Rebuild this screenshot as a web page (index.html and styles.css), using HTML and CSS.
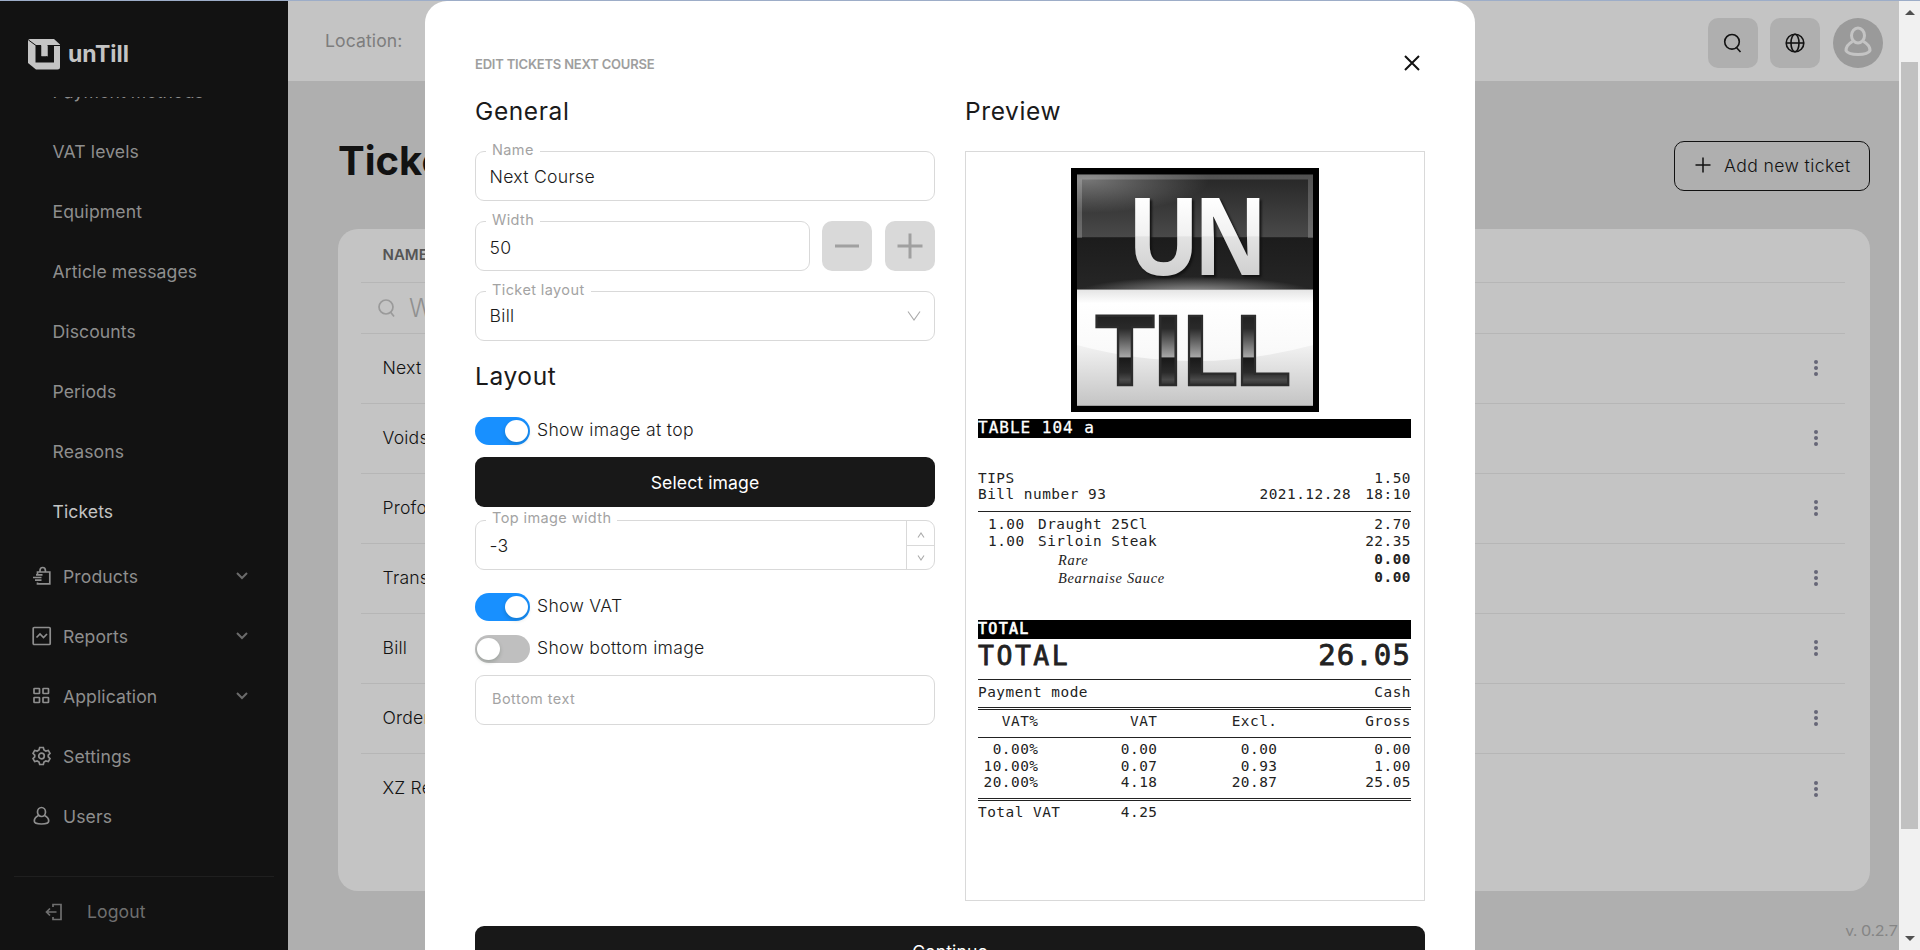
FILE: index.html
```html
<!DOCTYPE html>
<html lang="en">
<head>
<meta charset="utf-8">
<title>unTill – Tickets</title>
<link rel="stylesheet" href="styles.css">
</head>
<body>
<div class="app">
  <aside class="sidebar">
    <div class="brand">
      <svg width="33" height="31" viewBox="0 0 33 31"><path d="M6 0H26L32 5.500V28Q32 30.500 29.500 30.500H8L0 24V2Q0 0 2 0Z" fill="#c4c4c4"/><path d="M0.500 1L8 6.500H13V18H19V6.500H32" fill="none" stroke="#121212" stroke-width="1"/><path d="M7.500 6.500H13V17.500H20V6.500H26V23.500H7.500Z" fill="#121212"/><path d="M13.500 0H19.500V17H13.500Z" fill="#c4c4c4"/></svg>
      <span>unTill</span>
    </div>
    <nav class="menu">
      <div class="submenu">
        <a class="sub">Payment methods</a><a class="sub">VAT levels</a><a class="sub">Equipment</a><a class="sub">Article messages</a><a class="sub">Discounts</a><a class="sub">Periods</a><a class="sub">Reasons</a><a class="sub active">Tickets</a>
      </div>
      <a class="item"><svg class="ico" viewBox="0 0 20 20"><path d="M5.500 8.500V6H17.800V17.800H5.500V16.500M8 6V4.500Q8 1.500 10.700 1.500Q13.400 1.500 13.400 4.500V6M4 8.800H10.500M1 11.500H9.500M3 14.200H9.500"/></svg><span>Products</span><svg class="chev" viewBox="0 0 14 10"><path d="M2 2L7 7L12 2"/></svg></a>
      <a class="item"><svg class="ico" viewBox="0 0 20 20"><rect x="1.200" y="1.500" width="17" height="17" rx="1"/><path d="M4.500 11.500L8 8L11.500 11.500L15 8"/></svg><span>Reports</span><svg class="chev" viewBox="0 0 14 10"><path d="M2 2L7 7L12 2"/></svg></a>
      <a class="item"><svg class="ico" viewBox="0 0 20 20"><rect x="2" y="2.500" width="5.500" height="5" rx=".5"/><rect x="11" y="2.500" width="5.500" height="5" rx=".5"/><rect x="2" y="11.500" width="5.500" height="5" rx=".5"/><rect x="11" y="11.500" width="5.500" height="5" rx=".5"/></svg><span>Application</span><svg class="chev" viewBox="0 0 14 10"><path d="M2 2L7 7L12 2"/></svg></a>
      <a class="item"><svg class="ico" viewBox="0 0 20 20"><path d="M7.700 1.500H11.300L12 4L13.800 5L16.300 4.400L18 7.400L16.300 9.200V10.800L18 12.600L16.300 15.600L13.800 15L12 16L11.300 18.500H7.700L7 16L5.200 15L2.700 15.600L1 12.600L2.700 10.800V9.200L1 7.400L2.700 4.400L5.200 5L7 4Z"/><circle cx="9.500" cy="10" r="2.800"/></svg><span>Settings</span></a>
      <a class="item"><svg class="ico" viewBox="0 0 20 20"><ellipse cx="9.500" cy="6" rx="4" ry="4.500"/><path d="M6.500 9.500Q2.300 11.500 2.300 15Q2.300 18 9.500 18Q16.700 18 16.700 15Q16.700 11.500 12.500 9.500"/></svg><span>Users</span></a>
    </nav>
    <div class="logout"><svg class="ico" viewBox="0 0 20 20"><path d="M8 5V2.500H16V17.500H8V15M1.500 10H11.500M5 6.500L1.500 10L5 13.500"/></svg><span>Logout</span></div>
  </aside>
  <main class="main">
    <header class="topbar">
      <span class="location">Location:</span>
      <div class="tools">
        <div class="tool"><svg width="20" height="20" viewBox="0 0 20 20"><circle cx="9" cy="8.800" r="7.300"/><path d="M13 14L17.500 19"/></svg></div>
        <div class="tool"><svg width="20" height="20" viewBox="0 0 20 20"><circle cx="10" cy="10" r="8.800"/><ellipse cx="10" cy="10" rx="4" ry="8.800"/><path d="M1.200 10H18.800"/></svg></div>
        <div class="avatar"><svg width="30" height="32" viewBox="0 0 30 32"><ellipse cx="15" cy="9.500" rx="6.500" ry="7.500"/><path d="M9.500 15.500Q3 19 3 24.500Q5 28.500 15 28.500Q25 28.500 27 24.500Q27 19 20.500 15.500"/></svg></div>
      </div>
    </header>
    <div class="page-head">
      <h1>Tickets</h1>
      <div class="add"><svg width="16" height="16" viewBox="0 0 16 16"><path d="M8 .5V15.500M.5 8H15.500" stroke="#121212" stroke-width="1.500"/></svg><span>Add new ticket</span></div>
    </div>
    <section class="card">
      <div class="thead">NAME</div>
      <div class="search"><svg width="20" height="20" viewBox="0 0 20 20"><circle cx="9" cy="9" r="7"/><path d="M13.500 14L17 18.500"/></svg><span>W</span></div>
      <div class="row"><span>Next</span><i class="dots"></i></div>
      <div class="row"><span>Voids</span><i class="dots"></i></div>
      <div class="row"><span>Profo</span><i class="dots"></i></div>
      <div class="row"><span>Trans</span><i class="dots"></i></div>
      <div class="row"><span>Bill</span><i class="dots"></i></div>
      <div class="row"><span>Order</span><i class="dots"></i></div>
      <div class="row"><span>XZ Re</span><i class="dots"></i></div>
    </section>
    <div class="version">v. 0.2.7</div>
  </main>
  <div class="scrollbar"><i class="arrow up"></i><i class="thumb"></i><i class="arrow down"></i></div>
</div>

<div class="modal">
  <div class="modal-head"><span>EDIT TICKETS NEXT COURSE</span><svg width="18" height="18" viewBox="0 0 18 18"><path d="M2 2L16 16M16 2L2 16" stroke="#121212" stroke-width="2"/></svg></div>
  <div class="cols">
    <div class="form">
      <h2>General</h2>
      <div class="field name"><label>Name</label><span>Next Course</span></div>
      <div class="width-row">
        <div class="field"><label>Width</label><span>50</span></div>
        <div class="step"><svg width="26" height="26" viewBox="0 0 26 26"><path d="M1 13H25"/></svg></div>
        <div class="step"><svg width="26" height="26" viewBox="0 0 26 26"><path d="M.5 13H25.500M13 .5V25.500"/></svg></div>
      </div>
      <div class="field select"><label>Ticket layout</label><span>Bill</span><svg width="14" height="10" viewBox="0 0 14 10"><path d="M1 .5L7 9L13 .5"/></svg></div>
      <h2 class="h-layout">Layout</h2>
      <div class="switch-row first"><i class="switch on"></i><span>Show image at top</span></div>
      <div class="button select-image">Select image</div>
      <div class="field number"><label>Top image width</label><span>-3</span>
        <div class="spin"><div><svg width="8" height="6" viewBox="0 0 8 6"><path d="M1 5.500L4 1L7 5.500"/></svg></div><div><svg width="8" height="6" viewBox="0 0 8 6"><path d="M1 .5L4 5L7 .5"/></svg></div></div>
      </div>
      <div class="switch-row vat"><i class="switch on"></i><span>Show VAT</span></div>
      <div class="switch-row bottom"><i class="switch"></i><span>Show bottom image</span></div>
      <div class="field placeholder"><span>Bottom text</span></div>
    </div>
    <div class="preview">
      <h2>Preview</h2>
      <div class="ticket">
        <svg class="pic" width="248" height="244" viewBox="0 0 248 244">
          <defs>
            <linearGradient id="top" x1="0" y1="0" x2="0" y2="1"><stop offset="0" stop-color="#262626"/><stop offset=".54" stop-color="#494949"/><stop offset=".55" stop-color="#1c1c1c"/><stop offset="1" stop-color="#262626"/></linearGradient>
            <radialGradient id="shine" cx=".04" cy=".08" r=".52"><stop offset="0" stop-color="#fff" stop-opacity=".36"/><stop offset="1" stop-color="#fff" stop-opacity="0"/></radialGradient>
            <radialGradient id="glow" cx=".5" cy="1" r=".5" gradientTransform="translate(0 .1)"><stop offset="0" stop-color="#999"/><stop offset="1" stop-color="#999" stop-opacity="0"/></radialGradient>
            <linearGradient id="low" x1="0" y1="0" x2="0" y2="1"><stop offset="0" stop-color="#e4e4e4"/><stop offset=".12" stop-color="#fff"/><stop offset=".5" stop-color="#fafafa"/><stop offset="1" stop-color="#eee"/></linearGradient>
            <linearGradient id="wave" x1="0" y1="0" x2="0" y2="1"><stop offset="0" stop-color="#f2f2f2"/><stop offset="1" stop-color="#c4c4c4"/></linearGradient>
            <linearGradient id="un" gradientUnits="userSpaceOnUse" x1="0" y1="30" x2="0" y2="108"><stop offset="0" stop-color="#fff"/><stop offset=".48" stop-color="#f1f1f1"/><stop offset=".5" stop-color="#e3e3e3"/><stop offset="1" stop-color="#cfcfcf"/></linearGradient>
            <linearGradient id="till" gradientUnits="userSpaceOnUse" x1="0" y1="146" x2="0" y2="219"><stop offset="0" stop-color="#202020"/><stop offset=".2" stop-color="#2a2a2a"/><stop offset=".59" stop-color="#a8a8a8"/><stop offset=".6" stop-color="#181818"/><stop offset=".8" stop-color="#2a2a2a"/><stop offset=".9" stop-color="#4a4a4a"/><stop offset="1" stop-color="#2a2a2a"/></linearGradient>
          </defs>
          <rect width="248" height="244"/>
          <rect x="6" y="6.500" width="236" height="115" fill="url(#top)"/>
          <rect x="6" y="6.500" width="236" height="64" fill="url(#shine)"/>
          <path d="M8.500 70V9H239.500V70" fill="none" stroke="#fff" stroke-opacity=".2" stroke-width="5"/>
          <rect x="6" y="90" width="236" height="31.500" fill="url(#glow)"/>
          <rect x="6" y="121.500" width="236" height="116" fill="url(#low)"/>
          <path d="M6 177Q124 209 242 177V237.500H6Z" fill="url(#wave)"/>
          <g class="un"><text x="56" y="107" textLength="73" lengthAdjust="spacingAndGlyphs">U</text><text x="122.500" y="107" textLength="74" lengthAdjust="spacingAndGlyphs">N</text></g>
          <g class="till"><text x="24.500" y="217" textLength="59" lengthAdjust="spacingAndGlyphs">T</text><text x="82" y="217" textLength="30" lengthAdjust="spacingAndGlyphs">I</text><text x="112" y="217" textLength="55" lengthAdjust="spacingAndGlyphs">L</text><text x="165" y="217" textLength="55" lengthAdjust="spacingAndGlyphs">L</text></g>
        </svg>
        <div class="bar">TABLE 104 a</div>
        <div class="r tips"><span>TIPS</span><span>1.50</span></div>
        <div class="r"><span>Bill number 93</span><span class="date">2021.12.28 <b>18:10</b></span></div>
        <div class="rule r1"></div>
        <div class="r art"><span>1.00</span><span>Draught 25Cl</span><span>2.70</span></div>
        <div class="r art"><span>1.00</span><span>Sirloin Steak</span><span>22.35</span></div>
        <div class="opts">
          <div class="r opt"><em>Rare</em><strong>0.00</strong></div>
          <div class="r opt"><em>Bearnaise Sauce</em><strong>0.00</strong></div>
        </div>
        <div class="bar total-bar"><b>TOTAL</b></div>
        <div class="big"><span>TOTAL</span><span class="sum">26.05</span></div>
        <div class="rule r2"></div>
        <div class="r"><span>Payment mode</span><span>Cash</span></div>
        <div class="rule dbl first-dbl"></div>
        <div class="r v vh"><span>VAT%</span><span>VAT</span><span>Excl.</span><span>Gross</span></div>
        <div class="rule r3"></div>
        <div class="r v"><span>0.00%</span><span>0.00</span><span>0.00</span><span>0.00</span></div>
        <div class="r v"><span>10.00%</span><span>0.07</span><span>0.93</span><span>1.00</span></div>
        <div class="r v"><span>20.00%</span><span>4.18</span><span>20.87</span><span>25.05</span></div>
        <div class="rule dbl"></div>
        <div class="r v sumrow"><span>Total VAT</span><span>4.25</span></div>
      </div>
    </div>
  </div>
  <div class="button continue">Continue</div>
</div>
</body>
</html>
```
FILE: styles.css
```css
* { box-sizing: border-box; }
body { margin: 0; width: 1920px; height: 950px; overflow: hidden; position: relative; font-family: Inter, "Liberation Sans", sans-serif; font-size: 17.6px; color: #1a1a1a; }
svg { display: block; flex: none; }
.app { display: flex; height: 950px; border-top: 1px solid #9dadc8; background: #afafaf; }

/* Sidebar */
.sidebar { width: 288px; background: #121212; display: flex; flex-direction: column; flex: none; letter-spacing: .1px; }
.brand { display: flex; align-items: center; gap: 7px; height: 96px; padding: 10px 0 0 28px; color: #c4c4c4; font-weight: 700; font-size: 23px; letter-spacing: 0; flex: none; }
.menu { height: 762px; overflow: hidden; color: #8e8e8e; }
.submenu { margin-top: -36px; margin-bottom: 5px; }
.sub { display: flex; align-items: center; height: 60px; padding-left: 52.500px; }
.active { color: #c4c4c4; }
.item { display: flex; align-items: center; height: 60px; padding: 0 39px 0 32px; }
.item span { flex: 1; margin-left: 11px; }
.ico { width: 20px; height: 20px; }
.ico, .chev { fill: none; stroke: #8e8e8e; stroke-width: 1.700; }
.chev { width: 14px; height: 10px; stroke: #6a6a6a; stroke-width: 2; }
.logout { display: flex; align-items: center; gap: 22px; height: 70px; margin: 17px 14px 0; padding-left: 31px; border-top: 1px solid #1f1f1f; color: #6f6f6f; }
.logout .ico { stroke: #6f6f6f; }

/* Page below the dialog */
.main { flex: 1; display: flex; flex-direction: column; }
.topbar { height: 80px; background: #c4c4c4; display: flex; justify-content: space-between; align-items: center; padding: 4px 16px 0 37px; flex: none; }
.location { color: #7d7d7d; margin-top: -5px; letter-spacing: .1px; }
.tools { display: flex; }
.tool, .avatar { width: 50px; height: 50px; border-radius: 10px; background: #afafaf; display: flex; align-items: center; justify-content: center; margin-right: 12px; }
.tool svg { fill: none; stroke: #121212; stroke-width: 1.600; }
.avatar { border-radius: 50%; background: #9a9a9a; margin: 0 0 0 1px; padding-bottom: 3px; }
.avatar svg { fill: none; stroke: #c4c4c4; stroke-width: 3; }
.page-head { height: 148px; display: flex; justify-content: space-between; align-items: center; padding: 22px 29px 0 50px; flex: none; }
h1 { margin: -10px 0 0; font-size: 40px; font-weight: 700; color: #121212; line-height: 48px; }
.add { width: 196px; height: 50px; border: 1px solid #121212; border-radius: 10px; display: flex; align-items: center; gap: 13px; padding: 0 0 2px 20px; font-weight: 300; color: #121212; letter-spacing: .4px; }
.card { height: 662px; margin: 0 29px 0 50px; border-radius: 20px; background: #c4c4c4; padding: 0 25px 0 23px; flex: none; }
.thead { height: 54px; padding-left: 21.500px; line-height: 51px; font-size: 15px; font-weight: 600; color: #555; border-bottom: 1px solid #b6b6b6; }
.search { height: 51px; display: flex; align-items: center; gap: 12px; padding-left: 16px; border-bottom: 1px solid #b6b6b6; font-size: 25px; font-weight: 300; color: #909090; }
.search svg { fill: none; stroke: #9a9a9a; stroke-width: 1.700; }
.row { height: 70px; display: flex; justify-content: space-between; align-items: center; padding: 0 27px 3px 21.500px; border-bottom: 1px solid #b6b6b6; font-weight: 300; color: #121212; letter-spacing: .2px; }
.row:last-child { border: 0; }
.dots { width: 4px; height: 4px; border-radius: 50%; background: #667; box-shadow: 0 -6px #667, 0 6px #667; margin-bottom: -2px; }
.version { text-align: right; font-family: Lato, sans-serif; font-size: 16px; letter-spacing: .2px; color: #858585; margin-top: 29px; padding-right: 1px; }
.scrollbar { width: 21px; background: #f1f1f1; display: flex; flex-direction: column; align-items: center; flex: none; }
.arrow { border: 5px solid transparent; width: 0; height: 0; }
.up { border-bottom-color: #505050; margin-top: 4px; }
.thumb { width: 17px; height: 767px; background: #c1c1c1; margin: 47px 0 107px; }
.down { border-top-color: #505050; }

/* Dialog */
.modal { position: absolute; left: 425px; top: 1px; width: 1050px; height: 949px; overflow: hidden; background: #fff; border-radius: 22px 22px 0 0; padding: 0 50px; }
.modal-head { height: 90px; padding-top: 34px; display: flex; justify-content: space-between; align-items: center; font-size: 13px; font-weight: 600; color: #9e9e9e; letter-spacing: -.2px; }
.modal-head span { padding-top: 2px; }
.modal-head svg { margin-right: 4px; }
.cols { display: flex; gap: 30px; height: 810px; }
.form, .preview { width: 460px; }
h2 { margin: 0; height: 60px; line-height: 40px; font-size: 24.500px; font-weight: 400; letter-spacing: .6px; }
.field { position: relative; height: 50px; border: 1px solid #d9d9d9; border-radius: 9px; padding: 0 13.500px; display: flex; align-items: center; font-weight: 300; }
.field > span, .switch-row span { letter-spacing: .3px; }
.field label { position: absolute; left: 10px; top: -11px; line-height: 18px; padding: 0 6px; background: #fff; font-size: 14.500px; font-weight: 400; color: #a3a3a3; letter-spacing: .4px; }
.number label { top: -12px; }
.field svg { fill: none; stroke: #aaa; stroke-width: 1.100; }
.width-row { display: flex; margin: 20px 0; }
.width-row .field { width: 335px; padding-top: 2px; }
.step { width: 50px; height: 50px; border-radius: 10px; background: #d9d9d9; margin-left: 12px; display: flex; align-items: center; justify-content: center; }
.step + .step { margin-left: 13px; }
.step svg { stroke: #a0a0a0; stroke-width: 3; }
.select { justify-content: space-between; }
.select > span { margin-top: -2px; }
.h-layout { height: 76px; padding-top: 15px; }
.switch-row { display: flex; align-items: center; gap: 7px; height: 28px; font-weight: 300; }
.switch-row span { margin-top: -3px; }
.switch { width: 55px; height: 28px; border-radius: 14px; background: #bfbfbf; padding: 3px 2px; }
.switch::after { content: ""; display: block; width: 23px; height: 22px; border-radius: 50%; background: #fff; box-shadow: 0 2px 4px rgba(0,35,11,.2); }
.on { background: #1890ff; }
.on::after { margin-left: 28px; }
.button { height: 50px; border-radius: 9px; background: #181818; color: #fff; display: flex; align-items: center; justify-content: center; letter-spacing: .1px; }
.select-image { margin: 12px 0 13px; }
.number { padding-right: 0; }
.spin { width: 28px; height: 48px; margin-left: auto; border-left: 1px solid #d9d9d9; }
.spin div { height: 24px; display: flex; align-items: center; justify-content: center; padding-top: 3px; }
.spin div + div { border-top: 1px solid #d9d9d9; padding-top: 0; }
.vat { margin: 23px 0 14px; }
.placeholder { margin-top: 12px; padding: 0 16px 4px; color: #a3a3a3; font-size: 14.500px; font-weight: 400; }
.placeholder > span { letter-spacing: .45px; }
.continue { margin-top: 25px; }

/* Ticket preview */
.ticket { height: 750px; border: 1px solid #d9d9d9; padding: 16px 13px 0 12px; font-family: "DejaVu Sans Mono", monospace; font-size: 14.400px; letter-spacing: .5px; color: #222; }
.pic { margin: 0 auto 7px; }
.un { font: 700 107px "Open Sans", sans-serif; letter-spacing: 0; fill: url(#un); filter: drop-shadow(2px 2px 1px #111); }
.till { font: 700 101px "Liberation Sans", sans-serif; letter-spacing: 0; fill: url(#till); stroke: #2c2c2c; stroke-width: 2.500px; }
.bar { height: 19px; line-height: 17px; background: #000; color: #fff; font-size: 16px; letter-spacing: 1px; margin-bottom: 31px; -webkit-text-stroke: .3px #fff; }
.r { height: 16.500px; line-height: 16.500px; display: flex; justify-content: space-between; }
.tips span { padding-top: 1px; }
.date { display: flex; gap: 14px; }
.date b { font-weight: 400; }
.rule { border-top: 1px solid #222; }
.r1 { height: 5px; margin-top: 9px; }
.r2 { height: 5px; margin-top: 7px; }
.r3 { height: 4px; margin-top: 7.500px; }
.dbl { height: 6px; border-top: 3px double #222; margin-top: 7.500px; }
.first-dbl { margin-top: 6.500px; }
.art span:first-child { padding-left: 10px; width: 60px; }
.art span:nth-child(2) { flex: 1; }
.opts { margin: 1px 0 34px; }
.opt { height: 18px; line-height: 18px; }
.opt em { font-family: "Liberation Serif", serif; padding: 1px 0 0 80px; letter-spacing: .7px; }
.total-bar { margin: 0; }
.total-bar b { letter-spacing: 1.300px; font-size: 15px; font-weight: 400; -webkit-text-stroke: .7px #fff; }
.big { height: 33px; line-height: 33px; display: flex; justify-content: space-between; font-size: 26.500px; letter-spacing: 2.500px; -webkit-text-stroke: .8px #222; }
.sum { font-size: 29px; letter-spacing: 1.100px; }
.v { display: grid; grid-template-columns: 60.500px 119px 120px 1fr; text-align: right; }
.sumrow { grid-template-columns: 100px 79.500px; justify-content: start; }
.sumrow span:first-child { text-align: left; }
```
